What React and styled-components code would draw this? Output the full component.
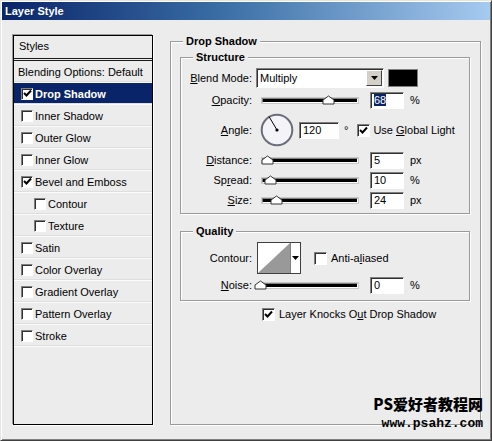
import React from 'react'
import { styled, createGlobalStyle } from 'styled-components'

const GlobalStyle = createGlobalStyle`
	html, body {
		margin: 0;
		padding: 0;
		background: #ececec;
	}
	body {
		font-family: 'Liberation Sans', Arial, sans-serif;
		font-size: 11px;
		color: #000;
	}
	* {
		box-sizing: border-box;
	}
`

const Window = styled.div`
	position: relative;
	width: 492px;
	height: 441px;
	display: flex;
	flex-direction: column;
	background: #ececec;
	border: 1px solid;
	border-color: #e4e4e4 #404040 #404040 #e4e4e4;
	box-shadow: inset 1px 1px 0 #fff, inset -1px -1px 0 #808080;
`

const TitleBar = styled.div`
	height: 18px;
	margin: 1px 1px 0;
	padding-left: 3px;
	display: flex;
	align-items: center;
	background: linear-gradient(to right, #0a246a 0%, #3a6ea5 45%, #a6caf0 100%);
	color: #fff;
	font-weight: bold;
	font-size: 11px;
`

const Body = styled.div`
	display: flex;
	align-items: flex-start;
	padding: 15px 0 0 12px;
`

const StylesPanel = styled.div`
	width: 140px;
	height: 390px;
	border: 1px solid #000;
	box-shadow: -1px -1px 0 #9a9a9a, 1px 1px 0 #fff;
	background: #ececec;
`

const PanelHead = styled.div`
	height: 25px;
	padding: 0 0 2px 5px;
	display: flex;
	align-items: center;
	border-bottom: 3px double #1a1a1a;
`

const Item = styled.div`
	height: 22px;
	display: flex;
	align-items: center;
	gap: 2px;
	padding-left: ${({ $indent, $plain }) => ($plain ? 4 : $indent ? 20 : 7)}px;
	border-bottom: 1px solid #fbfbfb;
	box-shadow: inset 0 -1px 0 #dedede;
	background: ${({ $active }) => ($active ? '#0a246a' : 'transparent')};
	color: ${({ $active }) => ($active ? '#fff' : '#000')};
	font-weight: ${({ $active }) => ($active ? 'bold' : 'normal')};
	white-space: nowrap;
`

const Box = styled.span`
	position: relative;
	flex-shrink: 0;
	width: ${({ $size }) => $size || 13}px;
	height: ${({ $size }) => $size || 13}px;
	background: #fff;
	border: 1px solid;
	border-color: #808080 #fff #fff #808080;
	box-shadow: inset 1px 1px 0 #303030;
	display: inline-flex;
	align-items: center;
	justify-content: center;
	margin-left: ${({ $ml }) => $ml || 0}px;
	margin-right: ${({ $mr }) => $mr || 0}px;
`

const Check = ({ checked, size, ml, mr }) => (
	<Box $size={size} $ml={ml} $mr={mr}>
		{checked && (
			<svg width="9" height="9" viewBox="0 0 9 9">
				<path d="M1 4 L3.5 6.5 L8 1.5" fill="none" stroke="#000" strokeWidth="2" />
			</svg>
		)}
	</Box>
)

const Group = styled.div`
	position: relative;
	width: ${({ $w }) => $w}px;
	height: ${({ $h }) => $h}px;
	margin-top: ${({ $mt }) => $mt || 0}px;
	margin-left: ${({ $ml }) => $ml || 0}px;
	padding: ${({ $pad }) => $pad};
	border: 1px solid #9a9a9a;
	box-shadow: inset 1px 1px 0 #fff, 1px 1px 0 #fff;
`

const Legend = styled.span`
	position: absolute;
	top: -8px;
	left: 12px;
	padding: 0 3px;
	line-height: 14px;
	background: #ececec;
	font-weight: bold;
`

const Row = styled.div`
	display: flex;
	align-items: center;
	height: ${({ $h }) => $h}px;
	margin-top: ${({ $mt }) => $mt || 0}px;
	margin-left: ${({ $ml }) => $ml || 0}px;
	white-space: nowrap;
`

const Label = styled.span`
	width: 71px;
	flex-shrink: 0;
	text-align: right;
	margin-right: ${({ $gap }) => $gap ?? 4}px;
`

const Text = styled.span`
	white-space: pre;
`

const Select = styled.div`
	width: 128px;
	height: 20px;
	display: flex;
	align-items: center;
	justify-content: space-between;
	padding: 0 1px 0 3px;
	background: #fff;
	border: 1px solid;
	border-color: #808080 #fff #fff #808080;
	box-shadow: inset 1px 1px 0 #303030;
`

const DropButton = styled.span`
	width: 16px;
	height: 16px;
	display: flex;
	align-items: center;
	justify-content: center;
	background: #d4d0c8;
	border: 1px solid;
	border-color: #fff #404040 #404040 #fff;
`

const Swatch = styled.span`
	width: 30px;
	height: 18px;
	margin-left: 4px;
	background: #000;
	border: 1px solid #808080;
`

const SliderWrap = styled.div`
	position: relative;
	width: 110px;
	height: 20px;
	margin-right: 4px;
	padding: 0 8px 0 6px;
	display: flex;
	align-items: center;
`

const Track = styled.div`
	width: 96px;
	height: 5px;
	background: #000;
	border: 1px solid;
	border-color: #808080 #fff #fff #808080;
	box-shadow: 0 0 0 1px #c8c8c8;
`

const ThumbIcon = styled.svg`
	position: absolute;
	top: 5px;
`

const Slider = ({ at }) => (
	<SliderWrap>
		<Track />
		<ThumbIcon width="13" height="10" viewBox="0 0 13 10" style={{ left: at }}>
			<path d="M1 9 L1 5 L6.5 1 L12 5 L12 9 Z" fill="#fff" stroke="#333" strokeWidth="1" />
		</ThumbIcon>
	</SliderWrap>
)

const NumBox = styled.div`
	width: ${({ $w }) => $w || 34}px;
	height: 17px;
	padding-left: 3px;
	display: flex;
	align-items: center;
	background: #fff;
	border: 1px solid;
	border-color: #808080 #fff #fff #808080;
	box-shadow: inset 1px 1px 0 #303030;
	margin-left: ${({ $ml }) => $ml || 0}px;
`

const Picked = styled.span`
	background: #0a246a;
	color: #fff;
`

const Unit = styled.span`
	margin-left: ${({ $ml }) => $ml || 6}px;
`

const Dial = () => (
	<svg width="34" height="34" viewBox="0 0 34 34" style={{ marginLeft: 4 }}>
		<circle cx="17" cy="17" r="15.3" fill="#f4f4f8" stroke="#6a6e7a" strokeWidth="2" />
		<line x1="17" y1="17" x2="9" y2="3.5" stroke="#000" strokeWidth="1" />
		<circle cx="17" cy="17" r="1.6" fill="#000" />
	</svg>
)

const ContourBox = styled.div`
	display: flex;
	height: 32px;
	margin-left: 1px;
	border: 1px solid #404040;
	background: #fff;
`

const ContourArrow = styled.span`
	width: 10px;
	display: flex;
	align-items: center;
	justify-content: center;
	border-left: 1px solid #808080;
	background: #fff;
`

const Arrow = () => (
	<svg width="7" height="4" viewBox="0 0 7 4">
		<path d="M0 0 L7 0 L3.5 4 Z" fill="#000" />
	</svg>
)

const Watermark = styled.div`
	position: absolute;
	right: 8px;
	bottom: 6px;
	text-align: right;
	font-weight: bold;
	line-height: 20px;
	color: #000;
`

const WmTitle = styled.div`
	font-family: 'Noto Sans CJK SC', 'Liberation Sans', sans-serif;
	font-size: 15px;
	font-weight: 900;
`

const WmUrl = styled.div`
	font-family: 'Liberation Mono', monospace;
	font-size: 13px;
`

const items = [
	{ name: 'Drop Shadow', checked: true, active: true },
	{ name: 'Inner Shadow' },
	{ name: 'Outer Glow' },
	{ name: 'Inner Glow' },
	{ name: 'Bevel and Emboss', checked: true },
	{ name: 'Contour', indent: true },
	{ name: 'Texture', indent: true },
	{ name: 'Satin' },
	{ name: 'Color Overlay' },
	{ name: 'Gradient Overlay' },
	{ name: 'Pattern Overlay' },
	{ name: 'Stroke' },
]

export default function App() {
	return (
		<>
			<GlobalStyle />
			<Window>
				<TitleBar>Layer Style</TitleBar>
				<Body>
					<StylesPanel>
						<PanelHead>Styles</PanelHead>
						<Item $plain>Blending Options: Default</Item>
						{items.map((it) => (
							<Item key={it.name} $active={it.active} $indent={it.indent}>
								<Check checked={it.checked} size={12} />
								{it.name}
							</Item>
						))}
					</StylesPanel>

					<Group $w={311} $h={384} $mt={6} $ml={17} $pad="15px 10px 0 9px">
						<Legend>Drop Shadow</Legend>

						<Group $w={290} $h={157} $pad="9px 0 0 0">
							<Legend>Structure</Legend>
							<Row $h={22}>
								<Label><u>B</u>lend Mode:</Label>
								<Select>
									Multiply
									<DropButton><Arrow /></DropButton>
								</Select>
								<Swatch />
							</Row>
							<Row $h={22}>
								<Label><u>O</u>pacity:</Label>
								<Slider at={66} />
								<NumBox><Picked>68</Picked></NumBox>
								<Unit>%</Unit>
							</Row>
							<Row $h={38}>
								<Label><u>A</u>ngle:</Label>
								<Dial />
								<NumBox $w={40} $ml={5}>120</NumBox>
								<Unit $ml={5}>°</Unit>
								<Check checked ml={9} mr={3} />
								<Text>Use <u>G</u>lobal Light</Text>
							</Row>
							<Row $h={20} $mt={1}>
								<Label><u>D</u>istance:</Label>
								<Slider at={5} />
								<NumBox>5</NumBox>
								<Unit>px</Unit>
							</Row>
							<Row $h={20}>
								<Label>Sp<u>r</u>ead:</Label>
								<Slider at={8} />
								<NumBox>10</NumBox>
								<Unit>%</Unit>
							</Row>
							<Row $h={20}>
								<Label><u>S</u>ize:</Label>
								<Slider at={14} />
								<NumBox>24</NumBox>
								<Unit>px</Unit>
							</Row>
						</Group>

						<Group $w={290} $h={70} $mt={17} $pad="10px 0 0 0">
							<Legend>Quality</Legend>
							<Row $h={32}>
								<Label>Contour:</Label>
								<ContourBox>
									<svg width="32" height="30" viewBox="0 0 32 30">
										<path d="M0 30 L32 0 L32 30 Z" fill="#999" />
									</svg>
									<ContourArrow><Arrow /></ContourArrow>
								</ContourBox>
								<Check ml={13} mr={4} />
								<Text>Anti-a<u>l</u>iased</Text>
							</Row>
							<Row $h={18} $mt={2}>
								<Label><u>N</u>oise:</Label>
								<Slider at={-2} />
								<NumBox>0</NumBox>
								<Unit>%</Unit>
							</Row>
						</Group>

						<Row $h={14} $mt={6} $ml={82}>
							<Check checked mr={4} />
							<Text>Layer Knocks O<u>u</u>t Drop Shadow</Text>
						</Row>
					</Group>
				</Body>
				<Watermark>
					<WmTitle>PS爱好者教程网</WmTitle>
					<WmUrl>www.psahz.com</WmUrl>
				</Watermark>
			</Window>
		</>
	)
}
